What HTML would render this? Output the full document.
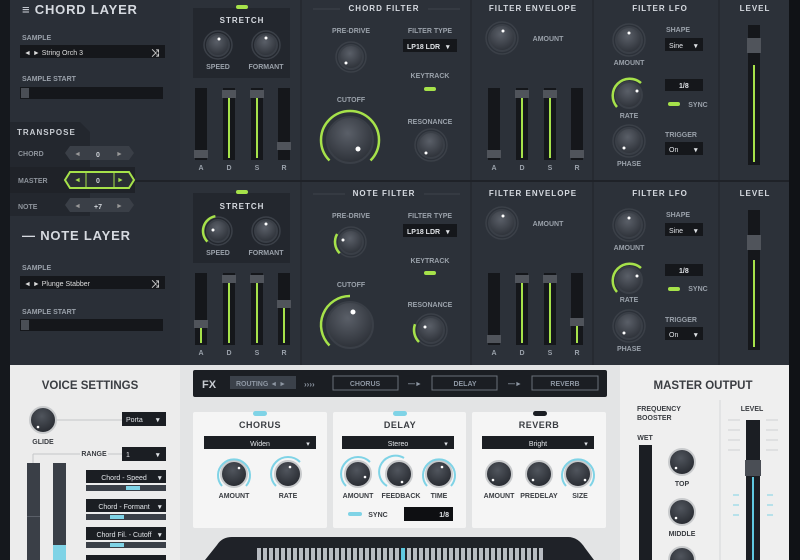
<!DOCTYPE html>
<html><head><meta charset="utf-8"><style>
html,body{margin:0;padding:0;background:#15181d;}
svg{display:block;font-family:"Liberation Sans",sans-serif;font-weight:bold;}
</style></head><body>
<svg width="800" height="560" viewBox="0 0 800 560" xmlns="http://www.w3.org/2000/svg">
<defs>
<radialGradient id="kg" cx="45%" cy="35%" r="70%"><stop offset="0" stop-color="#5a5f68"/><stop offset="1" stop-color="#2a2e35"/></radialGradient>
<radialGradient id="kl" cx="45%" cy="35%" r="70%"><stop offset="0" stop-color="#50555d"/><stop offset="1" stop-color="#24272d"/></radialGradient>
</defs>
<rect width="800" height="560" fill="#15181d"/>
<rect x="10" y="0" width="779" height="365" fill="#2c3139"/>
<rect x="10" y="0" width="170" height="365" fill="#2a2f37"/>
<rect x="470" y="0" width="2" height="365" fill="#262a31"/>
<rect x="592" y="0" width="2" height="365" fill="#262a31"/>
<rect x="718" y="0" width="2" height="365" fill="#262a31"/>
<rect x="300" y="0" width="2" height="365" fill="#262a31"/>
<rect x="10" y="180" width="779" height="2" fill="#1f2228"/>
<rect x="789" y="0" width="11" height="560" fill="#101216"/>

<g fill="#d6dae0" font-size="13" letter-spacing="0.8">
<text x="22" y="14">≡ CHORD LAYER</text>
<text x="22" y="240">— NOTE LAYER</text>
</g>
<g fill="#9aa1aa" font-size="7">
<text x="22" y="40">SAMPLE</text><text x="22" y="81">SAMPLE START</text>
<text x="22" y="270">SAMPLE</text><text x="22" y="314">SAMPLE START</text>
</g>
<rect x="20" y="45" width="145" height="13" fill="#15171b"/>
<text x="24" y="55" fill="#ddd" font-size="7" font-weight="normal">◄ ► String Orch 3</text>
<text x="151" y="56" fill="#ccc" font-size="10">⤨</text>
<rect x="20" y="87" width="143" height="12" fill="#15171b"/><rect x="21" y="88" width="8" height="10" fill="#4a4e55"/>
<rect x="20" y="276" width="145" height="13" fill="#15171b"/>
<text x="24" y="286" fill="#ddd" font-size="7" font-weight="normal">◄ ► Plunge Stabber</text>
<text x="151" y="287" fill="#ccc" font-size="10">⤨</text>
<rect x="20" y="319" width="143" height="12" fill="#15171b"/><rect x="21" y="320" width="8" height="10" fill="#4a4e55"/>

<path d="M10 122 H80 L90 132 V216 H10 Z" fill="#23272e"/>
<rect x="10" y="167" width="125" height="26" fill="#1f2228"/>
<text x="17" y="135" fill="#c8ccd2" font-size="8" letter-spacing="1">TRANSPOSE</text>
<g fill="#8e949c" font-size="7"><text x="18" y="156">CHORD</text><text x="18" y="183">MASTER</text><text x="18" y="209">NOTE</text></g>
<g font-size="7" fill="#cfd3d8">
<path d="M70 146 H129 L134 153 L129 160 H70 L65 153 Z" fill="#3a3f47"/><text x="96" y="157">0</text><text x="74" y="156" fill="#999">◄</text><text x="116" y="156" fill="#999">►</text>
<path d="M70 172 H129 L134 180 L129 188 H70 L65 180 Z" fill="#2a2e34" stroke="#a6e24a" stroke-width="2"/><line x1="86" y1="173" x2="86" y2="187" stroke="#a6e24a"/><line x1="114" y1="173" x2="114" y2="187" stroke="#a6e24a"/><text x="96" y="183">0</text><text x="74" y="182" fill="#a6e24a">◄</text><text x="117" y="182" fill="#a6e24a">►</text>
<path d="M70 198 H129 L134 205 L129 212 H70 L65 205 Z" fill="#3a3f47"/><text x="94" y="209">+7</text><text x="74" y="208" fill="#999">◄</text><text x="116" y="208" fill="#999">►</text>
</g>

<rect x="193" y="8" width="97" height="70" fill="#23272e"/>
<rect x="193" y="193" width="97" height="70" fill="#23272e"/>
<rect x="236" y="5" width="12" height="4" rx="2" fill="#a6e24a"/>
<rect x="236" y="190" width="12" height="4" rx="2" fill="#a6e24a"/>
<g fill="#d6dae0" font-size="8" letter-spacing="1" text-anchor="middle">
<text x="242" y="23">STRETCH</text><text x="242" y="209">STRETCH</text>
<text x="384" y="11">CHORD FILTER</text><text x="384" y="196">NOTE FILTER</text>
<text x="533" y="11">FILTER ENVELOPE</text><text x="533" y="196">FILTER ENVELOPE</text>
<text x="660" y="11">FILTER LFO</text><text x="660" y="196">FILTER LFO</text>
<text x="755" y="11">LEVEL</text><text x="755" y="196">LEVEL</text>
</g>
<g stroke="#3e434b"><line x1="313" y1="9" x2="340" y2="9"/><line x1="428" y1="9" x2="460" y2="9"/><line x1="313" y1="194" x2="345" y2="194"/><line x1="424" y1="194" x2="460" y2="194"/></g>
<g fill="#9aa1aa" font-size="7" text-anchor="middle">
<text x="218" y="69">SPEED</text><text x="266" y="69">FORMANT</text>
<text x="218" y="255">SPEED</text><text x="266" y="255">FORMANT</text>
<text x="351" y="33">PRE-DRIVE</text><text x="351" y="102">CUTOFF</text>
<text x="351" y="218">PRE-DRIVE</text><text x="351" y="287">CUTOFF</text>
<text x="430" y="33">FILTER TYPE</text><text x="430" y="78">KEYTRACK</text><text x="430" y="124">RESONANCE</text>
<text x="430" y="218">FILTER TYPE</text><text x="430" y="263">KEYTRACK</text><text x="430" y="307">RESONANCE</text>
<text x="548" y="41">AMOUNT</text><text x="548" y="226">AMOUNT</text>
<text x="629" y="65">AMOUNT</text><text x="629" y="118">RATE</text><text x="629" y="166">PHASE</text>
<text x="629" y="250">AMOUNT</text><text x="629" y="302">RATE</text><text x="629" y="351">PHASE</text>
<text x="678" y="32">SHAPE</text><text x="681" y="137">TRIGGER</text><text x="698" y="107">SYNC</text>
<text x="678" y="217">SHAPE</text><text x="681" y="322">TRIGGER</text><text x="698" y="291">SYNC</text>
<text x="201" y="170">A</text><text x="229" y="170">D</text><text x="257" y="170">S</text><text x="284" y="170">R</text>
<text x="201" y="355">A</text><text x="229" y="355">D</text><text x="257" y="355">S</text><text x="284" y="355">R</text>
<text x="494" y="170">A</text><text x="522" y="170">D</text><text x="550" y="170">S</text><text x="577" y="170">R</text>
<text x="494" y="355">A</text><text x="522" y="355">D</text><text x="550" y="355">S</text><text x="577" y="355">R</text>
</g>
<g font-size="7" fill="#e0e3e7">
<rect x="403" y="39" width="54" height="13" fill="#15171b"/><text x="407" y="49">LP18 LDR</text><text x="446" y="49">▾</text>
<rect x="403" y="224" width="54" height="13" fill="#15171b"/><text x="407" y="234">LP18 LDR</text><text x="446" y="234">▾</text>
<rect x="665" y="38" width="38" height="13" fill="#15171b"/><text x="669" y="48" font-weight="normal">Sine</text><text x="694" y="48">▾</text>
<rect x="665" y="223" width="38" height="13" fill="#15171b"/><text x="669" y="233" font-weight="normal">Sine</text><text x="694" y="233">▾</text>
<rect x="665" y="142" width="38" height="13" fill="#15171b"/><text x="669" y="152" font-weight="normal">On</text><text x="694" y="152">▾</text>
<rect x="665" y="327" width="38" height="13" fill="#15171b"/><text x="669" y="337" font-weight="normal">On</text><text x="694" y="337">▾</text>
<rect x="665" y="79" width="38" height="12" fill="#15171b"/><text x="679" y="88">1/8</text>
<rect x="665" y="264" width="38" height="12" fill="#15171b"/><text x="679" y="273">1/8</text>
</g>
<g fill="#a6e24a"><rect x="424" y="87" width="12" height="4" rx="2"/><rect x="424" y="271" width="12" height="4" rx="2"/><rect x="668" y="102" width="12" height="4" rx="2"/><rect x="668" y="287" width="12" height="4" rx="2"/></g>

<g fill="none" stroke="#3b4048" stroke-width="1.5">
<circle cx="218" cy="45" r="14"/><circle cx="266" cy="45" r="14"/>
<circle cx="218" cy="231" r="14"/><circle cx="266" cy="231" r="14"/>
<circle cx="351" cy="57" r="15"/><circle cx="351" cy="242" r="15"/>
<circle cx="431" cy="145" r="16"/><circle cx="431" cy="330" r="16"/>
<circle cx="502" cy="38" r="16"/><circle cx="502" cy="223" r="16"/>
<circle cx="629" cy="40" r="16"/><circle cx="629" cy="141" r="16"/>
<circle cx="629" cy="225" r="16"/><circle cx="629" cy="326" r="16"/>
</g>
<g stroke="#3a3f47" stroke-width="2" fill="url(#kg)">
<circle cx="218" cy="45" r="11"/><circle cx="266" cy="45" r="11"/>
<circle cx="218" cy="231" r="11"/><circle cx="266" cy="231" r="11"/>
<circle cx="351" cy="57" r="12"/><circle cx="351" cy="242" r="12"/>
<circle cx="350" cy="140" r="23"/><circle cx="350" cy="325" r="23"/>
<circle cx="431" cy="145" r="13"/><circle cx="431" cy="330" r="13"/>
<circle cx="502" cy="38" r="13"/><circle cx="502" cy="223" r="13"/>
<circle cx="629" cy="40" r="13"/><circle cx="629" cy="95" r="13"/><circle cx="629" cy="141" r="13"/>
<circle cx="629" cy="225" r="13"/><circle cx="629" cy="280" r="13"/><circle cx="629" cy="326" r="13"/>
</g>
<g fill="none" stroke="#a6e24a" stroke-width="2.5">
<path d="M329.5 160.5 A29 29 0 1 1 370.5 160.5"/>
<path d="M329.5 345.5 A29 29 0 0 1 350 296"/>
<path d="M617 107 A17 17 0 0 1 641 83"/>
<path d="M617 292 A17 17 0 0 1 641 268"/>
<path d="M207.4 241.6 A15 15 0 0 1 215.4 216.2"/>
<path d="M419 342 A17 17 0 0 1 415 324.2"/>
<path d="M339.7 253.3 A16 16 0 0 1 337.1 234"/>
</g>
<g fill="#fff">
<circle cx="219" cy="39" r="1.5"/><circle cx="266" cy="38" r="1.5"/><circle cx="213" cy="230" r="1.5"/><circle cx="266" cy="224" r="1.5"/>
<circle cx="346" cy="63" r="1.5"/><circle cx="343" cy="240" r="1.5"/><circle cx="358" cy="149" r="2.5"/><circle cx="353" cy="312" r="2.5"/>
<circle cx="426" cy="153" r="1.5"/><circle cx="425" cy="327" r="1.5"/><circle cx="503" cy="31" r="1.5"/><circle cx="503" cy="216" r="1.5"/>
<circle cx="629" cy="33" r="1.5"/><circle cx="637" cy="91" r="1.5"/><circle cx="624" cy="148" r="1.5"/>
<circle cx="629" cy="218" r="1.5"/><circle cx="637" cy="276" r="1.5"/><circle cx="624" cy="333" r="1.5"/>
</g>

<g fill="#15171b">
<rect x="195" y="88" width="12" height="72"/><rect x="223" y="88" width="12" height="72"/><rect x="251" y="88" width="12" height="72"/><rect x="278" y="88" width="12" height="72"/>
<rect x="195" y="273" width="12" height="72"/><rect x="223" y="273" width="12" height="72"/><rect x="251" y="273" width="12" height="72"/><rect x="278" y="273" width="12" height="72"/>
<rect x="488" y="88" width="12" height="72"/><rect x="516" y="88" width="12" height="72"/><rect x="544" y="88" width="12" height="72"/><rect x="571" y="88" width="12" height="72"/>
<rect x="488" y="273" width="12" height="72"/><rect x="516" y="273" width="12" height="72"/><rect x="544" y="273" width="12" height="72"/><rect x="571" y="273" width="12" height="72"/>
<rect x="748" y="25" width="12" height="140"/><rect x="748" y="210" width="12" height="140"/>
</g>
<g stroke="#a6e24a" stroke-width="2">
<line x1="229" y1="96" x2="229" y2="158"/><line x1="257" y1="96" x2="257" y2="158"/>
<line x1="201" y1="328" x2="201" y2="343"/><line x1="229" y1="281" x2="229" y2="343"/><line x1="257" y1="281" x2="257" y2="343"/><line x1="284" y1="308" x2="284" y2="343"/>
<line x1="522" y1="96" x2="522" y2="158"/><line x1="550" y1="96" x2="550" y2="158"/>
<line x1="522" y1="281" x2="522" y2="343"/><line x1="550" y1="281" x2="550" y2="343"/><line x1="577" y1="326" x2="577" y2="343"/>
<line x1="754" y1="65" x2="754" y2="162"/><line x1="754" y1="260" x2="754" y2="347"/>
</g>
<g fill="#50545b">
<rect x="194" y="150" width="14" height="8"/><rect x="222" y="90" width="14" height="8"/><rect x="250" y="90" width="14" height="8"/><rect x="277" y="142" width="14" height="8"/>
<rect x="194" y="320" width="14" height="8"/><rect x="222" y="275" width="14" height="8"/><rect x="250" y="275" width="14" height="8"/><rect x="277" y="300" width="14" height="8"/>
<rect x="487" y="150" width="14" height="8"/><rect x="515" y="90" width="14" height="8"/><rect x="543" y="90" width="14" height="8"/><rect x="570" y="150" width="14" height="8"/>
<rect x="487" y="335" width="14" height="8"/><rect x="515" y="275" width="14" height="8"/><rect x="543" y="275" width="14" height="8"/><rect x="570" y="318" width="14" height="8"/>
<rect x="747" y="38" width="14" height="15"/><rect x="747" y="235" width="14" height="15"/>
</g>

<rect x="10" y="365" width="779" height="195" fill="#e3e4e5"/>
<rect x="10" y="365" width="170" height="195" fill="#ececec"/>
<rect x="620" y="365" width="169" height="195" fill="#efefef"/>
<text x="90" y="389" text-anchor="middle" fill="#3a3d42" font-size="11.5">VOICE SETTINGS</text>
<text x="703" y="389" text-anchor="middle" fill="#3a3d42" font-size="11.5">MASTER OUTPUT</text>
<rect x="193" y="370" width="414" height="27" rx="2" fill="#1b1e23"/>
<text x="202" y="388" fill="#c8ccd2" font-size="11">FX</text>
<rect x="230" y="376" width="66" height="13" fill="#3b414a"/>
<text x="236" y="386" fill="#8d96a2" font-size="7">ROUTING ◄ ►</text>
<text x="304" y="387" fill="#8d96a2" font-size="8">››››</text>
<g fill="none" stroke="#6a7078"><rect x="333" y="376" width="65" height="14"/><rect x="432" y="376" width="65" height="14"/><rect x="532" y="376" width="66" height="14"/></g>
<g fill="#8d96a2" font-size="7" text-anchor="middle"><text x="365" y="386">CHORUS</text><text x="465" y="386">DELAY</text><text x="565" y="386">REVERB</text><text x="415" y="386">—►</text><text x="515" y="386">—►</text></g>
<g fill="#f5f5f5"><rect x="193" y="412" width="134" height="116" rx="2"/><rect x="333" y="412" width="133" height="116" rx="2"/><rect x="472" y="412" width="134" height="116" rx="2"/></g>
<rect x="253" y="411" width="14" height="5" rx="2.5" fill="#7fd3e6"/><rect x="393" y="411" width="14" height="5" rx="2.5" fill="#7fd3e6"/><rect x="533" y="411" width="14" height="5" rx="2.5" fill="#1b1e23"/>
<g fill="#3a3d42" font-size="9" text-anchor="middle" letter-spacing="0.5"><text x="260" y="428">CHORUS</text><text x="400" y="428">DELAY</text><text x="539" y="428">REVERB</text></g>
<g fill="#1b1e23"><rect x="204" y="436" width="112" height="13"/><rect x="342" y="436" width="112" height="13"/><rect x="482" y="436" width="112" height="13"/></g>
<g fill="#e0e3e7" font-size="7" font-weight="normal" text-anchor="middle"><text x="260" y="446">Widen</text><text x="398" y="446">Stereo</text><text x="538" y="446">Bright</text><text x="308" y="446">▾</text><text x="446" y="446">▾</text><text x="586" y="446">▾</text></g>
<g stroke="#c8cacc" stroke-width="2" fill="url(#kl)">
<circle cx="234" cy="474" r="13"/><circle cx="288" cy="474" r="13"/><circle cx="358" cy="474" r="13"/><circle cx="399" cy="474" r="13"/><circle cx="439" cy="474" r="13"/>
<circle cx="499" cy="474" r="13"/><circle cx="539" cy="474" r="13"/><circle cx="578" cy="474" r="13"/>
<circle cx="43" cy="420" r="13"/>
<circle cx="682" cy="462" r="13"/><circle cx="682" cy="512" r="13"/><circle cx="682" cy="560" r="13"/>
</g>
<g fill="none" stroke="#7fd3e6" stroke-width="2">
<path d="M222 486 A16 16 0 1 1 246 486"/><path d="M276 486 A16 16 0 0 1 300 462"/><path d="M346 486 A16 16 0 0 1 370 462"/>
<path d="M387 486 A16 16 0 0 1 404 458"/><path d="M427 486 A16 16 0 1 1 451 486"/><path d="M566 486 A16 16 0 1 1 590 486"/>
</g>
<g fill="#fff"><circle cx="239" cy="468" r="1.3"/><circle cx="290" cy="467" r="1.3"/><circle cx="365" cy="477" r="1.3"/><circle cx="402" cy="482" r="1.3"/><circle cx="442" cy="467" r="1.3"/><circle cx="493" cy="480" r="1.3"/><circle cx="533" cy="480" r="1.3"/><circle cx="585" cy="480" r="1.3"/><circle cx="38" cy="427" r="1.3"/><circle cx="676" cy="468" r="1.3"/><circle cx="676" cy="518" r="1.3"/></g>
<g fill="#3a3d42" font-size="7" text-anchor="middle">
<text x="234" y="498">AMOUNT</text><text x="288" y="498">RATE</text><text x="358" y="498">AMOUNT</text><text x="401" y="498">FEEDBACK</text><text x="439" y="498">TIME</text>
<text x="499" y="498">AMOUNT</text><text x="539" y="498">PREDELAY</text><text x="580" y="498">SIZE</text>
<text x="378" y="517">SYNC</text><text x="43" y="444">GLIDE</text><text x="94" y="456">RANGE</text>
<text x="682" y="486">TOP</text><text x="682" y="536">MIDDLE</text><text x="645" y="440">WET</text><text x="752" y="411">LEVEL</text>
<text x="637" y="411" text-anchor="start">FREQUENCY</text><text x="637" y="420" text-anchor="start">BOOSTER</text>
</g>
<rect x="348" y="512" width="14" height="4" rx="2" fill="#7fd3e6"/>
<rect x="404" y="507" width="49" height="14" fill="#0e0f12"/><text x="449" y="517" fill="#e0e3e7" font-size="7" text-anchor="end">1/8</text>
<path d="M232 537 H568 Q578 537 585 548 L594 560 H205 L217 545 Q222 537 232 537 Z" fill="#1f2228"/>
<g fill="#b8bcc2">
<rect x="257" y="548" width="4" height="12"/><rect x="263" y="548" width="4" height="12"/><rect x="269" y="548" width="4" height="12"/><rect x="275" y="548" width="4" height="12"/><rect x="281" y="548" width="4" height="12"/><rect x="287" y="548" width="4" height="12"/><rect x="293" y="548" width="4" height="12"/><rect x="299" y="548" width="4" height="12"/><rect x="305" y="548" width="4" height="12"/><rect x="311" y="548" width="4" height="12"/><rect x="317" y="548" width="4" height="12"/><rect x="323" y="548" width="4" height="12"/><rect x="329" y="548" width="4" height="12"/><rect x="335" y="548" width="4" height="12"/><rect x="341" y="548" width="4" height="12"/><rect x="347" y="548" width="4" height="12"/><rect x="353" y="548" width="4" height="12"/><rect x="359" y="548" width="4" height="12"/><rect x="365" y="548" width="4" height="12"/><rect x="371" y="548" width="4" height="12"/><rect x="377" y="548" width="4" height="12"/><rect x="383" y="548" width="4" height="12"/><rect x="389" y="548" width="4" height="12"/><rect x="395" y="548" width="4" height="12"/><rect x="407" y="548" width="4" height="12"/><rect x="413" y="548" width="4" height="12"/><rect x="419" y="548" width="4" height="12"/><rect x="425" y="548" width="4" height="12"/><rect x="431" y="548" width="4" height="12"/><rect x="437" y="548" width="4" height="12"/><rect x="443" y="548" width="4" height="12"/><rect x="449" y="548" width="4" height="12"/><rect x="455" y="548" width="4" height="12"/><rect x="461" y="548" width="4" height="12"/><rect x="467" y="548" width="4" height="12"/><rect x="473" y="548" width="4" height="12"/><rect x="479" y="548" width="4" height="12"/><rect x="485" y="548" width="4" height="12"/><rect x="491" y="548" width="4" height="12"/><rect x="497" y="548" width="4" height="12"/><rect x="503" y="548" width="4" height="12"/><rect x="509" y="548" width="4" height="12"/><rect x="515" y="548" width="4" height="12"/><rect x="521" y="548" width="4" height="12"/><rect x="527" y="548" width="4" height="12"/><rect x="533" y="548" width="4" height="12"/><rect x="539" y="548" width="4" height="12"/>
</g>
<rect x="401" y="548" width="4" height="12" fill="#5fc8e0"/>
<g stroke="#c4c6c8"><line x1="57" y1="420" x2="122" y2="420"/><line x1="33" y1="454" x2="80" y2="454"/><line x1="108" y1="454" x2="122" y2="454"/><line x1="33" y1="454" x2="33" y2="463"/></g>
<g fill="#1b1e23"><rect x="122" y="412" width="44" height="14"/><rect x="122" y="447" width="44" height="14"/>
<rect x="86" y="470" width="80" height="13"/><rect x="86" y="499" width="80" height="13"/><rect x="86" y="527" width="80" height="13"/><rect x="86" y="555" width="80" height="5"/></g>
<g fill="#3a3f47"><rect x="86" y="485" width="80" height="6"/><rect x="86" y="514" width="80" height="6"/><rect x="86" y="542" width="80" height="6"/></g>
<g fill="#7fd3e6"><rect x="126" y="486" width="14" height="4"/><rect x="110" y="515" width="14" height="4"/><rect x="110" y="543" width="14" height="4"/></g>
<g fill="#e0e3e7" font-size="7" font-weight="normal"><text x="126" y="422">Porta</text><text x="126" y="457">1</text></g>
<g fill="#e0e3e7" font-size="7" font-weight="normal" text-anchor="middle"><text x="124" y="480">Chord - Speed</text><text x="124" y="509">Chord - Formant</text><text x="124" y="537">Chord Fil. - Cutoff</text></g>
<g fill="#e0e3e7" font-size="7"><text x="156" y="422">▾</text><text x="156" y="457">▾</text><text x="158" y="480">▾</text><text x="158" y="509">▾</text><text x="158" y="537">▾</text></g>
<rect x="27" y="463" width="13" height="97" fill="#3a3f47"/><rect x="53" y="463" width="13" height="97" fill="#3a3f47"/>
<rect x="27" y="516" width="13" height="1" fill="#5a5f68"/><rect x="53" y="545" width="13" height="15" fill="#7fd3e6"/>
<line x1="720" y1="400" x2="720" y2="560" stroke="#d6d7d8"/>
<rect x="639" y="445" width="13" height="115" fill="#1b1e23"/>
<rect x="746" y="420" width="14" height="140" fill="#1b1e23"/>
<rect x="745" y="460" width="16" height="16" fill="#4a4e55"/>
<line x1="753" y1="477" x2="753" y2="560" stroke="#5fc8e0" stroke-width="2"/>
<g stroke="#cfd1d3"><line x1="728" y1="420" x2="740" y2="420"/><line x1="728" y1="430" x2="740" y2="430"/><line x1="728" y1="440" x2="740" y2="440"/><line x1="728" y1="450" x2="740" y2="450"/><line x1="766" y1="420" x2="778" y2="420"/><line x1="766" y1="430" x2="778" y2="430"/><line x1="766" y1="440" x2="778" y2="440"/><line x1="766" y1="450" x2="778" y2="450"/></g>
<g stroke="#7fd3e6"><line x1="733" y1="495" x2="739" y2="495"/><line x1="733" y1="505" x2="739" y2="505"/><line x1="733" y1="515" x2="739" y2="515"/><line x1="767" y1="495" x2="773" y2="495"/><line x1="767" y1="505" x2="773" y2="505"/><line x1="767" y1="515" x2="773" y2="515"/></g>
</svg>
</body></html>
